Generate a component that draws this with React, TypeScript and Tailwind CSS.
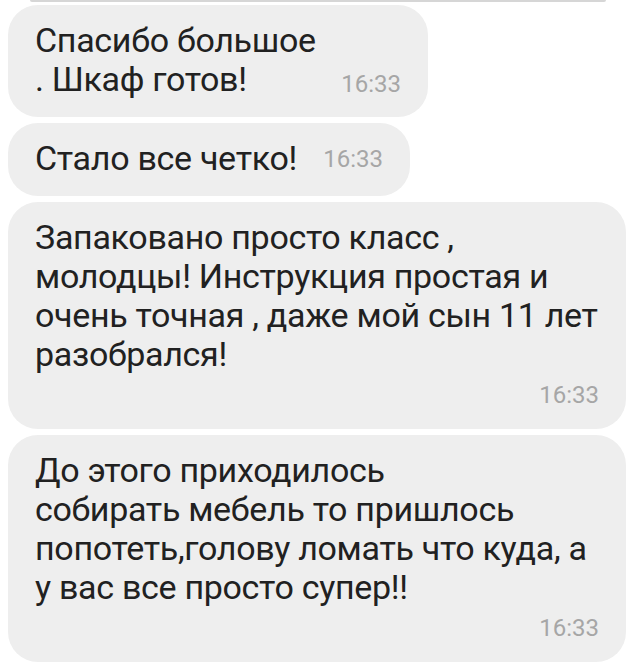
import React from "react";

const font = { fontFamily: "Roboto, 'Noto Sans', sans-serif" };

export default function App() {
  return (
    <div className="w-[640px] h-[667px] bg-white overflow-hidden relative" style={font}>
      <div className="h-[2px] mx-[30px] w-[576px] bg-[#d6d6d6] rounded-b" />
      <div className="flex flex-col items-start gap-[6px] pl-[8px] pt-[3px] text-[#212121]">
        {/* Bubble 1 */}
        <div className="w-[420px] h-[112px] rounded-[30px] bg-[#eeeeee] pl-[27px] pr-[27px] pt-[16px]">
          <div className="text-[34px] leading-[39px] tracking-[-0.3px]">Спасибо большое</div>
          <div className="flex items-baseline justify-between">
            <span className="text-[34px] leading-[39px] tracking-[-0.3px]">. Шкаф готов!</span>
            <span className="text-[24px] text-[#a6a6a6] relative top-[1px]">16:33</span>
          </div>
        </div>
        {/* Bubble 2 */}
        <div className="w-[402px] h-[73px] rounded-[30px] bg-[#eeeeee] pl-[27px] pr-[27px] pt-[16px]">
          <div className="flex items-baseline justify-between">
            <span className="text-[34px] leading-[39px] tracking-[-0.3px]">Стало все четко!</span>
            <span className="text-[24px] text-[#a6a6a6] relative top-[-3px]">16:33</span>
          </div>
        </div>
        {/* Bubble 3 */}
        <div className="w-[618px] h-[227px] rounded-[30px] bg-[#eeeeee] pl-[27px] pr-[27px] pt-[16px]">
          <div className="text-[34px] leading-[39px] tracking-[-0.3px]">
            <div>Запаковано просто класс ,</div>
            <div>молодцы! Инструкция простая и</div>
            <div>очень точная , даже мой сын 11 лет</div>
            <div>разобрался!</div>
          </div>
          <div className="flex justify-end text-[24px] text-[#a6a6a6] mt-[3px]">16:33</div>
        </div>
        {/* Bubble 4 */}
        <div className="w-[618px] h-[227px] rounded-[30px] bg-[#eeeeee] pl-[27px] pr-[27px] pt-[16px]">
          <div className="text-[34px] leading-[39px] tracking-[-0.3px]">
            <div>До этого приходилось</div>
            <div>собирать мебель то пришлось</div>
            <div>попотеть,голову ломать что куда, а</div>
            <div>у вас все просто супер!!</div>
          </div>
          <div className="flex justify-end text-[24px] text-[#a6a6a6] mt-[3px]">16:33</div>
        </div>
        <div className="h-[4px] ml-[17px] w-[585px] bg-[#d6d6d6] rounded-t mt-[-1px]" />
      </div>
    </div>
  );
}
